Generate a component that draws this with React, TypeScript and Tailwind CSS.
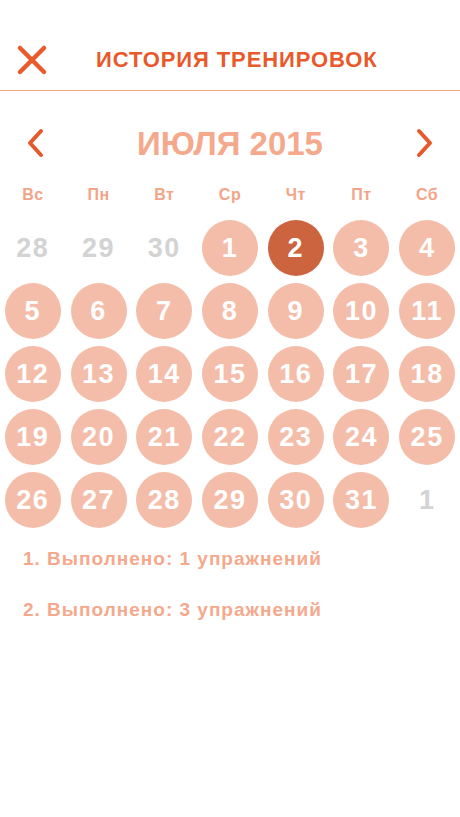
import React from 'react';

const weekdays = ['Вс', 'Пн', 'Вт', 'Ср', 'Чт', 'Пт', 'Сб'];

type Cell = { n: number; muted?: boolean; active?: boolean };

const cells: Cell[] = [
  { n: 28, muted: true },
  { n: 29, muted: true },
  { n: 30, muted: true },
  ...Array.from({ length: 31 }, (_, i) => ({ n: i + 1, active: i + 1 === 2 })),
  { n: 1, muted: true },
];

export default function App() {
  return (
    <div className="min-h-[817px] w-[460px] bg-white" style={{ fontFamily: '"Liberation Sans", Arial, sans-serif' }}>
      <header className="flex h-[91px] items-end border-b border-[#f3a88c] pb-[14px]">
        <button className="ml-[16px] flex h-[32px] w-[32px] items-center justify-center">
          <svg width="32" height="32" viewBox="0 0 32 32">
            <path d="M4 4 L28 28 M28 4 L4 28" stroke="#ea5a2b" strokeWidth="4.5" strokeLinecap="round" />
          </svg>
        </button>
        <h1 className="ml-[48px] text-[22px] font-bold leading-[32px] tracking-[0.9px] text-[#e8592c]">
          ИСТОРИЯ ТРЕНИРОВОК
        </h1>
      </header>

      <div className="mt-[30px] flex h-[44px] items-center justify-between px-[24px]">
        <svg width="22" height="32" viewBox="0 0 22 32">
          <path d="M17 4 L6 16 L17 28" fill="none" stroke="#e5592b" strokeWidth="4" strokeLinecap="round" strokeLinejoin="round" />
        </svg>
        <div className="text-[33px] font-bold leading-none text-[#f5a98c]">ИЮЛЯ 2015</div>
        <svg width="22" height="32" viewBox="0 0 22 32">
          <path d="M5 4 L16 16 L5 28" fill="none" stroke="#e5592b" strokeWidth="4" strokeLinecap="round" strokeLinejoin="round" />
        </svg>
      </div>

      <div className="mt-[20px] grid grid-cols-7">
        {weekdays.map((d) => (
          <div key={d} className="text-center text-[16px] font-bold leading-[20px] tracking-[0.5px] text-[#f3a487]">
            {d}
          </div>
        ))}
      </div>

      <div className="mt-[15px] grid grid-cols-7 gap-y-[7px]">
        {cells.map((c, i) => (
          <div key={i} className="flex justify-center">
            <div
              className={`flex h-[56px] w-[56px] items-center justify-center rounded-full text-[27px] font-bold leading-none tracking-[1.5px] ${
                c.muted ? 'text-[#d3d3d3]' : c.active ? 'bg-[#cd6440] text-white' : 'bg-[#f4bda9] text-white'
              }`}
            >
              {c.n}
            </div>
          </div>
        ))}
      </div>

      <div className="mt-[18px] flex flex-col gap-[26px] pl-[23px] text-[19px] font-bold leading-[25px] tracking-[1px] text-[#f5a98c]">
        <p>1. Выполнено: 1 упражнений</p>
        <p>2. Выполнено: 3 упражнений</p>
      </div>
    </div>
  );
}
